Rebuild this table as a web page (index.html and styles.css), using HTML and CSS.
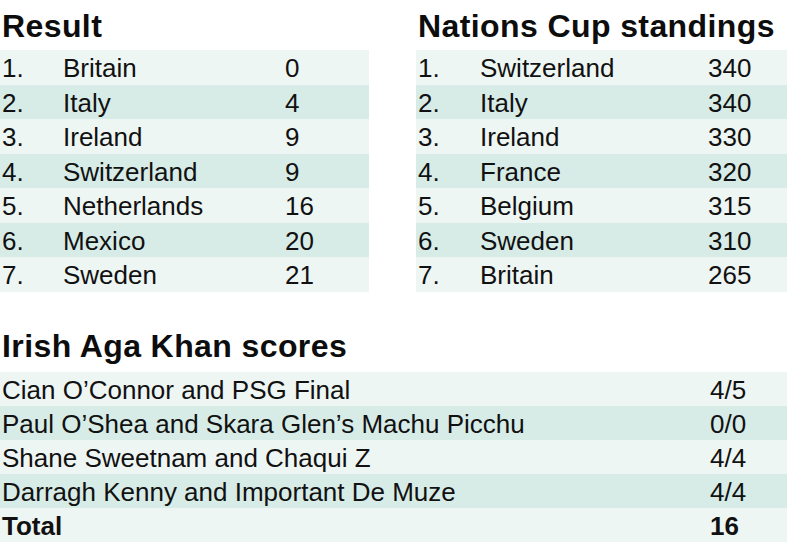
FILE: index.html
```html
<!DOCTYPE html>
<html>
<head>
<meta charset="utf-8">
<link rel="stylesheet" href="styles.css">
</head>
<body>
<div class="page">
  <div class="top">
    <section class="panel panel-left">
      <h2 class="title">Result</h2>
      <div class="table">
        <div class="row light"><span>1.</span><span>Britain</span><span>0</span></div>
        <div class="row dark"><span>2.</span><span>Italy</span><span>4</span></div>
        <div class="row light"><span>3.</span><span>Ireland</span><span>9</span></div>
        <div class="row dark"><span>4.</span><span>Switzerland</span><span>9</span></div>
        <div class="row light"><span>5.</span><span>Netherlands</span><span>16</span></div>
        <div class="row dark"><span>6.</span><span>Mexico</span><span>20</span></div>
        <div class="row light"><span>7.</span><span>Sweden</span><span>21</span></div>
      </div>
    </section>
    <section class="panel panel-right">
      <h2 class="title">Nations Cup standings</h2>
      <div class="table">
        <div class="row light"><span>1.</span><span>Switzerland</span><span>340</span></div>
        <div class="row dark"><span>2.</span><span>Italy</span><span>340</span></div>
        <div class="row light"><span>3.</span><span>Ireland</span><span>330</span></div>
        <div class="row dark"><span>4.</span><span>France</span><span>320</span></div>
        <div class="row light"><span>5.</span><span>Belgium</span><span>315</span></div>
        <div class="row dark"><span>6.</span><span>Sweden</span><span>310</span></div>
        <div class="row light"><span>7.</span><span>Britain</span><span>265</span></div>
      </div>
    </section>
  </div>
  <section class="panel panel-bottom">
    <h2 class="title">Irish Aga Khan scores</h2>
    <div class="table">
      <div class="row light"><span>Cian O’Connor and PSG Final</span><span>4/5</span></div>
      <div class="row dark"><span>Paul O’Shea and Skara Glen’s Machu Picchu</span><span>0/0</span></div>
      <div class="row light"><span>Shane Sweetnam and Chaqui Z</span><span>4/4</span></div>
      <div class="row dark"><span>Darragh Kenny and Important De Muze</span><span>4/4</span></div>
      <div class="row light total"><span>Total</span><span>16</span></div>
    </div>
  </section>
</div>
</body>
</html>
```

FILE: styles.css
```css
html, body {
  margin: 0;
  padding: 0;
  background: #ffffff;
}

.page {
  width: 790px;
  font-family: "Liberation Sans", Arial, Helvetica, sans-serif;
  color: #111111;
  padding-top: 8px;
}

.top {
  display: flex;
  gap: 47px;
}

.panel-left {
  width: 369px;
}

.panel-right {
  width: 371px;
}

.panel-bottom {
  width: 787px;
  margin-top: 36px;
}

.title {
  margin: 0 0 6px 2px;
  font-size: 32px;
  line-height: 36px;
  font-weight: bold;
  letter-spacing: 0.4px;
  color: #0d0d0d;
}

.panel-bottom .title {
  margin-bottom: 8px;
}

.row {
  display: grid;
  height: 34.5px;
  box-sizing: border-box;
  padding-top: 3px;
  padding-left: 2px;
  font-size: 26px;
  line-height: 31.5px;
  white-space: nowrap;
}

.panel-left .row {
  grid-template-columns: 61px 222px 1fr;
}

.panel-right .row {
  grid-template-columns: 62px 228px 1fr;
}

.panel-bottom .row {
  height: 34.2px;
  grid-template-columns: 708px 1fr;
}

.light {
  background: #eef6f4;
}

.dark {
  background: #d7ece7;
}

.total {
  font-weight: bold;
}
```
